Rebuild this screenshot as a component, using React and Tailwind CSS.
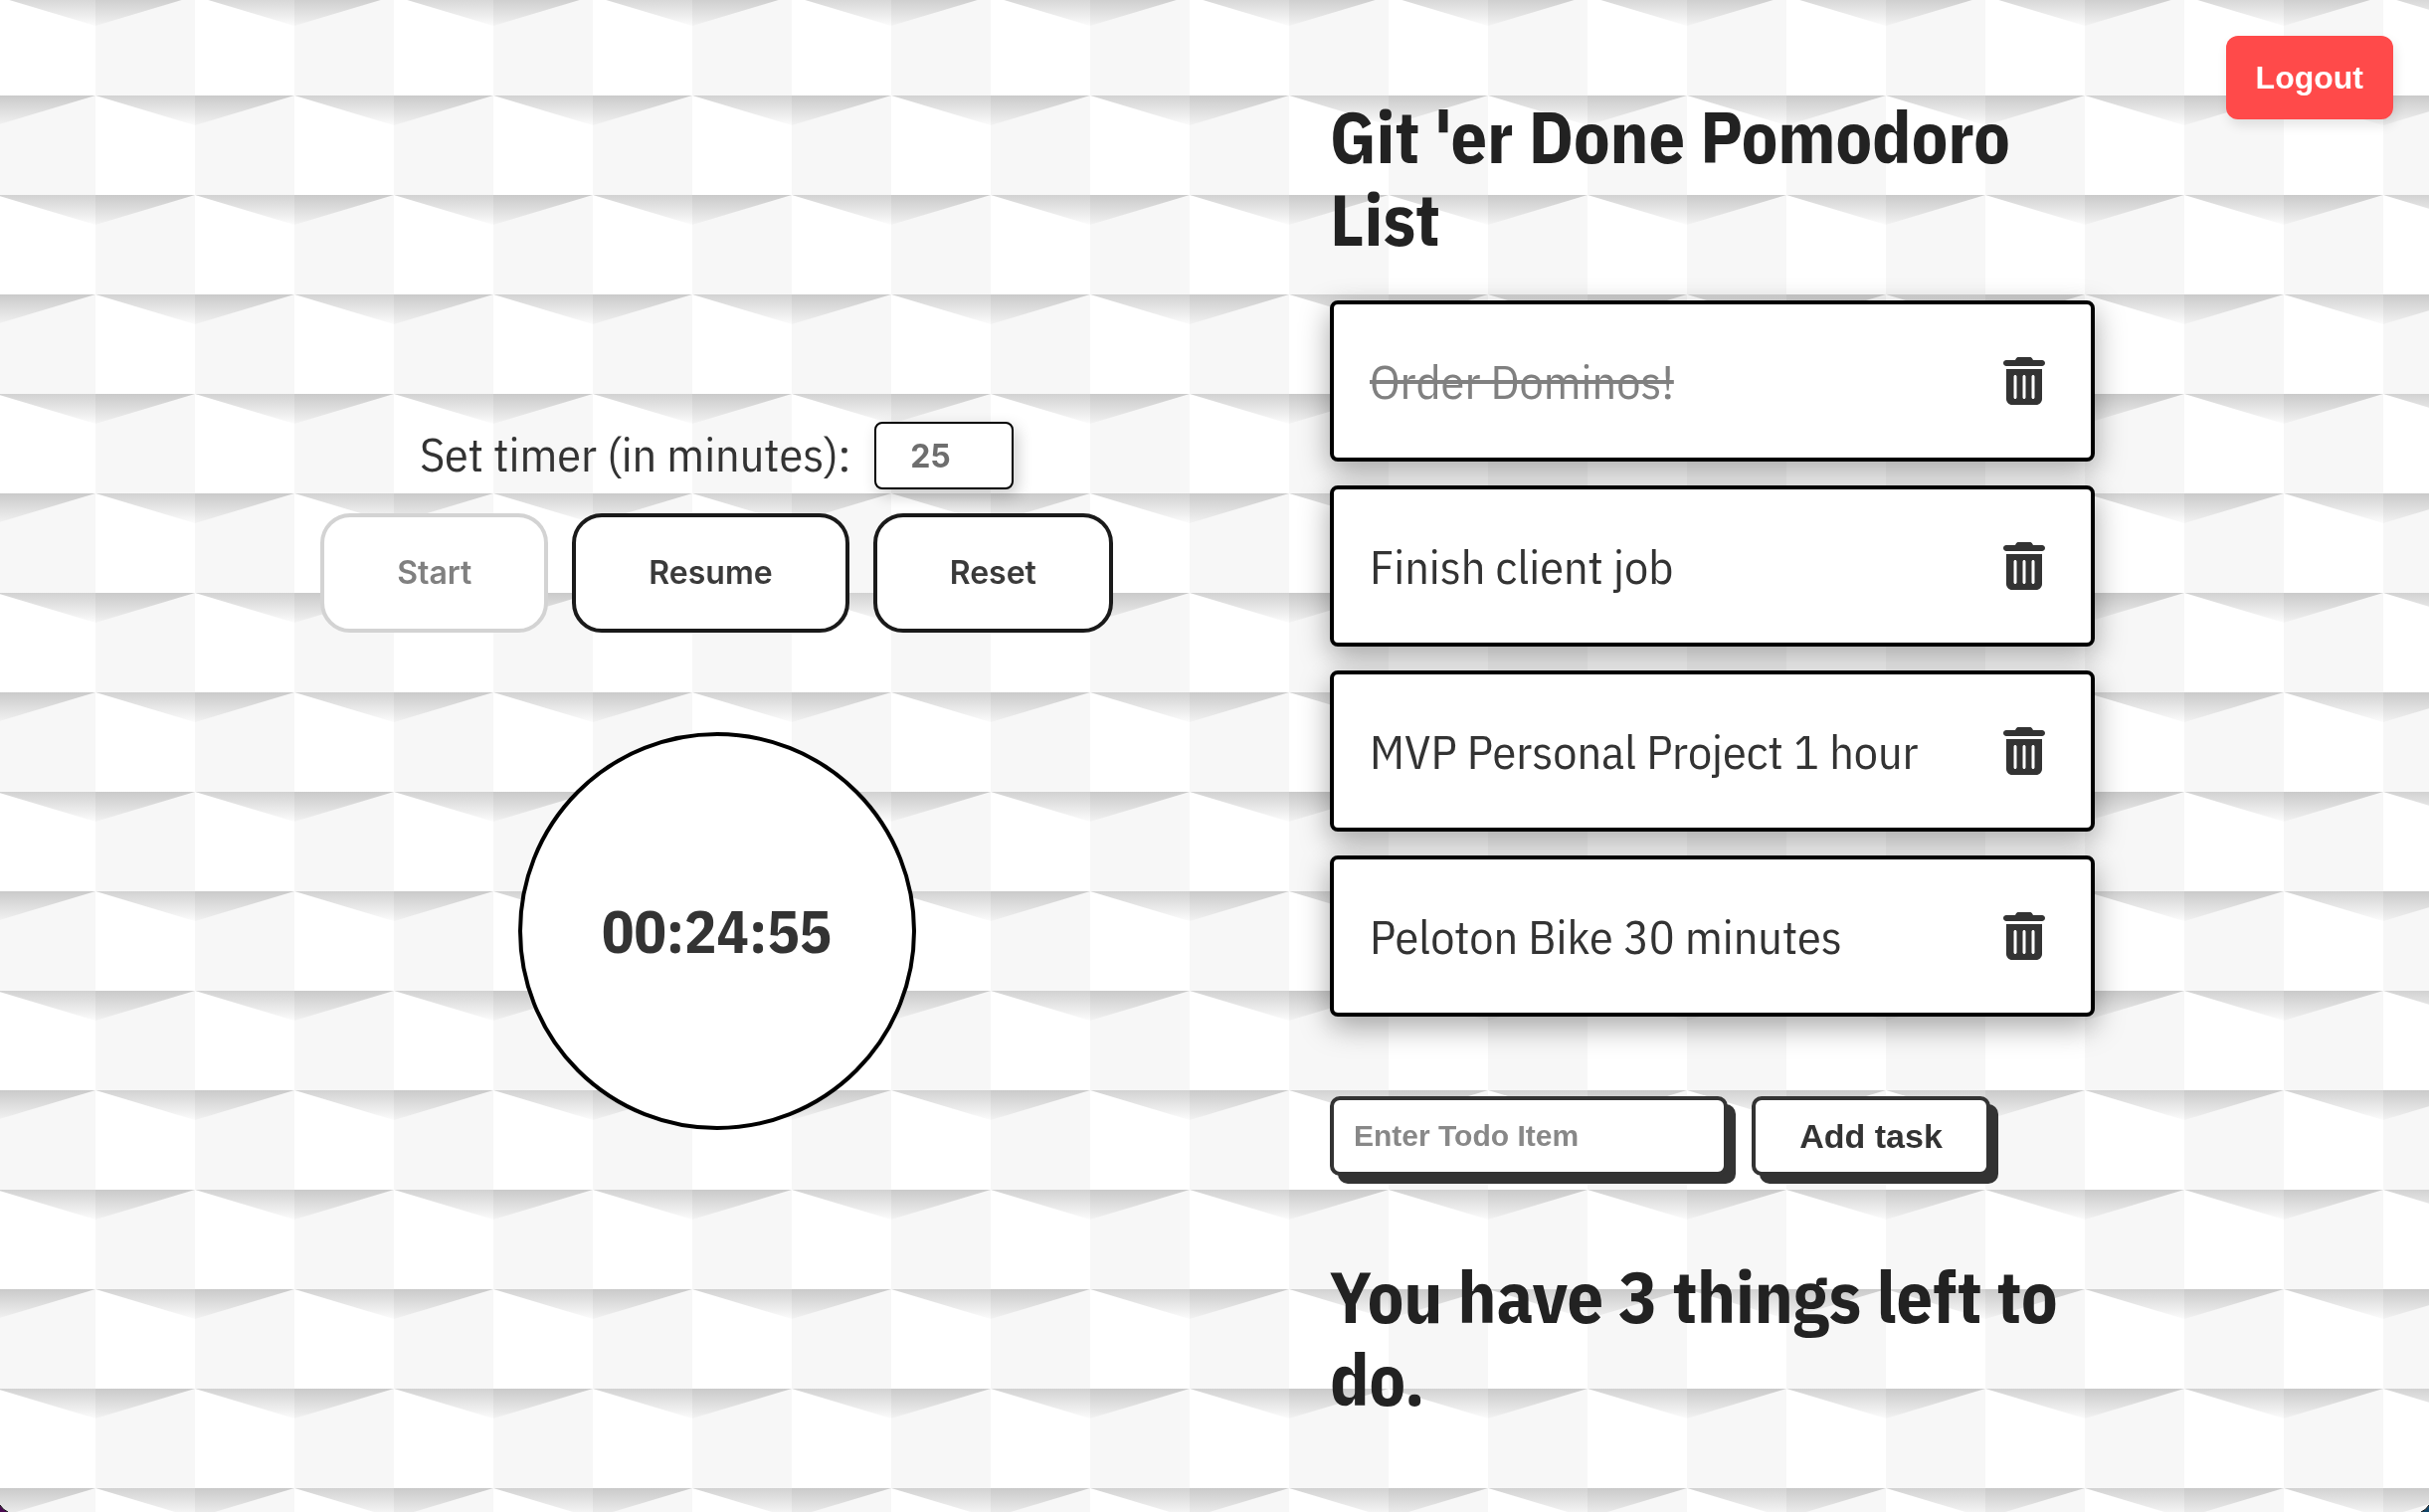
import React, { useState } from "react";
import { FaTrashCan } from "react-icons/fa6";

const initialTasks = [
  { id: 1, text: "Order Dominos!", done: true },
  { id: 2, text: "Finish client job", done: false },
  { id: 3, text: "MVP Personal Project 1 hour", done: false },
  { id: 4, text: "Peloton Bike 30 minutes", done: false },
];

/* Tiled squares that cast a small triangular shadow on the row below. */
function Backdrop() {
  return (
    <svg aria-hidden="true" className="fixed inset-0 -z-10 h-full w-full">
      <defs>
        <linearGradient id="shade-dark" x1="0" y1="0" x2="0" y2="1">
          <stop offset="0" stopColor="#cacaca" />
          <stop offset="1" stopColor="#f2f2f2" />
        </linearGradient>
        <linearGradient id="shade-light" x1="0" y1="0" x2="0" y2="1">
          <stop offset="0" stopColor="#d2d2d2" />
          <stop offset="1" stopColor="#fcfcfc" />
        </linearGradient>
        <pattern id="squares" width="200" height="200" patternUnits="userSpaceOnUse" x="-4" y="-4">
          <rect width="200" height="200" fill="#fff" />
          <rect x="100" width="100" height="100" fill="#f7f7f7" />
          <rect y="100" width="100" height="100" fill="#f7f7f7" />
          <path d="M0 0H100V30Z" fill="url(#shade-light)" />
          <path d="M100 0H200L100 30Z" fill="url(#shade-dark)" />
          <path d="M0 100H100L0 130Z" fill="url(#shade-dark)" />
          <path d="M100 100H200V130Z" fill="url(#shade-light)" />
        </pattern>
      </defs>
      <rect width="100%" height="100%" fill="url(#squares)" />
    </svg>
  );
}

function WindowCorners() {
  return (
    <div aria-hidden="true" className="pointer-events-none fixed inset-x-0 bottom-0 flex justify-between">
      <svg width="8" height="7" viewBox="0 0 8 7">
        <path d="M0 0Q3 5 8 7H0Z" fill="#4b0a52" />
        <path d="M0 0Q3 5 8 7" fill="none" stroke="#111" />
      </svg>
      <svg width="8" height="7" viewBox="0 0 8 7">
        <path d="M8 0Q5 5 0 7H8Z" fill="#0f4468" />
        <path d="M8 0Q5 5 0 7" fill="none" stroke="#111" />
      </svg>
    </div>
  );
}

function TimerButton({ children, disabled }) {
  return (
    <button
      type="button"
      disabled={disabled}
      className="h-30 rounded-[30px] border-4 border-[#1a1a1a] bg-white px-[73px] font-[Inter,sans-serif] text-[32px] font-semibold text-[#3a3a3a] disabled:border-[#d3d3d3] disabled:text-[#808080]"
    >
      {children}
    </button>
  );
}

function Timer() {
  return (
    <section className="flex flex-col items-center pt-9">
      <div className="flex items-start gap-6">
        <label htmlFor="minutes" className="text-5xl leading-16 text-[#333]">
          Set timer (in minutes):
        </label>
        <input
          id="minutes"
          type="text"
          inputMode="numeric"
          placeholder="25"
          className="h-[68px] w-35 rounded-lg border-2 border-black bg-white px-[34px] font-[Inter,sans-serif] text-[32px] font-bold shadow-[4px_6px_16px_rgba(0,0,0,0.2)] placeholder:text-[#6e6e6e]"
        />
      </div>
      <div className="mt-6 flex gap-6">
        <TimerButton disabled>Start</TimerButton>
        <TimerButton>Resume</TimerButton>
        <TimerButton>Reset</TimerButton>
      </div>
      <div
        role="timer"
        className="mt-25 flex size-100 items-center justify-center rounded-full border-4 border-black bg-white text-[60px] font-bold text-[#333]"
      >
        00:24:55
      </div>
    </section>
  );
}

function Task({ task, onToggle, onRemove }) {
  return (
    <li className="flex h-[162px] items-center justify-between rounded-lg border-4 border-black bg-white pr-[46px] pl-9 shadow-[0_10px_30px_rgba(0,0,0,0.35)]">
      <span
        onClick={onToggle}
        className={
          task.done ? "cursor-pointer text-5xl text-[#808080] line-through" : "cursor-pointer text-5xl text-[#333]"
        }
      >
        {task.text}
      </span>
      <button type="button" aria-label={"Delete " + task.text} onClick={onRemove} className="text-[#333]">
        <FaTrashCan className="h-12 w-[42px]" />
      </button>
    </li>
  );
}

function TodoList() {
  const [tasks, setTasks] = useState(initialTasks);
  const [draft, setDraft] = useState("");
  const left = tasks.filter((t) => !t.done).length;

  function addTask(e) {
    e.preventDefault();
    if (!draft.trim()) return;
    setTasks([...tasks, { id: Date.now(), text: draft.trim(), done: false }]);
    setDraft("");
  }

  return (
    <section className="text-[#222]">
      <h1 className="text-7xl leading-[83px] font-bold">Git 'er Done Pomodoro List</h1>
      <ul className="mt-10 flex flex-col gap-6">
        {tasks.map((task) => (
          <Task
            key={task.id}
            task={task}
            onToggle={() => setTasks(tasks.map((t) => (t.id === task.id ? { ...t, done: !t.done } : t)))}
            onRemove={() => setTasks(tasks.filter((t) => t.id !== task.id))}
          />
        ))}
      </ul>
      <form onSubmit={addTask} className="mt-20 flex gap-6 font-['Liberation_Sans',Arial,sans-serif] font-bold">
        <input
          aria-label="Todo item"
          placeholder="Enter Todo Item"
          value={draft}
          onChange={(e) => setDraft(e.target.value)}
          className="h-20 w-100 rounded-[10px] border-4 border-[#333] bg-white px-5 text-[30px] shadow-[8px_8px_0_#333] placeholder:text-[#888]"
        />
        <button
          type="submit"
          className="h-20 w-60 rounded-[10px] border-4 border-[#333] bg-white text-[34px] text-[#333] shadow-[8px_8px_0_#333]"
        >
          Add task
        </button>
      </form>
      <h2 className="mt-20 text-7xl leading-[83px] font-bold">{`You have ${left} things left to do.`}</h2>
    </section>
  );
}

export default function App() {
  return (
    <div className="relative isolate min-h-screen font-['IBM_Plex_Sans_Condensed','Roboto_Condensed',sans-serif]">
      <Backdrop />
      <button
        type="button"
        className="absolute top-9 right-9 h-21 rounded-xl bg-[#ff4a4a] px-[30px] font-['Liberation_Sans',Arial,sans-serif] text-[32px] font-bold text-white shadow-[2px_6px_12px_rgba(0,0,0,0.1)]"
      >
        Logout
      </button>
      <main className="grid min-h-screen grid-cols-[1233fr_769fr] items-center pt-1 pr-84 pl-[104px]">
        <Timer />
        <TodoList />
      </main>
      <WindowCorners />
    </div>
  );
}
